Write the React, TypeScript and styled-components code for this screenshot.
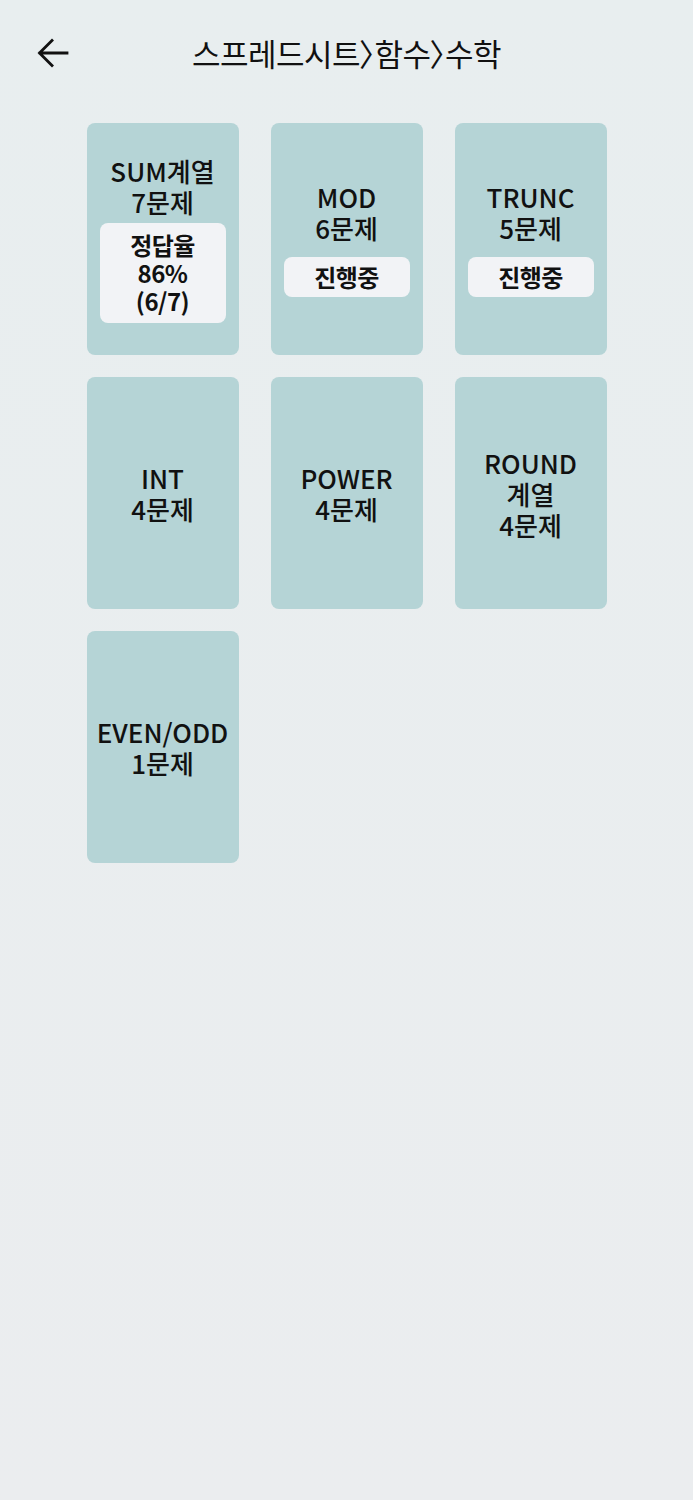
import * as React from "react";
import styled, { createGlobalStyle } from "styled-components";

type Topic = {
  name: string[];
  count: number;
  status?: "progress" | "done";
  rate?: { percent: number; correct: number; total: number };
};

const topics: Topic[] = [
  { name: ["SUM계열"], count: 7, status: "done", rate: { percent: 86, correct: 6, total: 7 } },
  { name: ["MOD"], count: 6, status: "progress" },
  { name: ["TRUNC"], count: 5, status: "progress" },
  { name: ["INT"], count: 4 },
  { name: ["POWER"], count: 4 },
  { name: ["ROUND", "계열"], count: 4 },
  { name: ["EVEN/ODD"], count: 1 },
];

const crumbs = ["스프레드시트", "함수", "수학"];

const GlobalStyle = createGlobalStyle`
  html, body {
    margin: 0;
    padding: 0;
  }
  body {
    font-family: "Noto Sans CJK KR", "Noto Sans", sans-serif;
    color: #111;
  }
`;

const Page = styled.div`
  min-height: 1500px;
  background: linear-gradient(180deg, #e8eeef 0%, #ebedef 100%);
  box-sizing: border-box;
`;

const Header = styled.header`
  height: 104px;
  padding-bottom: 2px;
  display: flex;
  align-items: center;
  position: relative;
  justify-content: center;
`;

const BackButton = styled.button`
  position: absolute;
  left: 36px;
  top: 36px;
  width: 34px;
  height: 34px;
  padding: 0;
  border: none;
  background: none;
  cursor: pointer;
  display: flex;
  align-items: center;
  justify-content: center;
`;

const Title = styled.h1`
  margin: 0;
  font-size: 31px;
  font-weight: 400;
  letter-spacing: -0.5px;
  color: #111;
`;

const Chevron = styled.span`
  margin-left: -1px;
  margin-right: -15px;
`;

const Grid = styled.div`
  display: grid;
  grid-template-columns: repeat(3, 152px);
  grid-auto-rows: 232px;
  column-gap: 32px;
  row-gap: 22px;
  justify-content: center;
  padding-top: 17px;
`;

const Card = styled.div`
  background: #b5d4d6;
  border-radius: 8px;
  display: flex;
  flex-direction: column;
  align-items: center;
  justify-content: center;
  padding: 0 13px;
  cursor: pointer;
`;

const CardTitle = styled.div`
  font-size: 26px;
  line-height: 31px;
  font-weight: 500;
  text-align: center;
  white-space: nowrap;
`;

const Badge = styled.div<{ $tall?: boolean }>`
  align-self: stretch;
  margin-top: ${(p) => (p.$tall ? "6px" : "14px")};
  background: #f2f3f6;
  border-radius: 8px;
  padding: ${(p) => (p.$tall ? "8px 0" : "6px 0")};
  font-size: 24px;
  line-height: 28px;
  font-weight: 700;
  letter-spacing: -0.5px;
  text-align: center;
`;

const BackIcon = () => (
  <svg width="34" height="34" viewBox="0 0 34 34" fill="none">
    <path
      d="M31 17H4M16 4.5L3.5 17L16 29.5"
      stroke="#111"
      strokeWidth="2.8"
      strokeLinecap="square"
    />
  </svg>
);

const TopicCard = ({ topic }: { topic: Topic }) => (
  <Card>
    {topic.name.map((line) => (
      <CardTitle key={line}>{line}</CardTitle>
    ))}
    <CardTitle>{topic.count}문제</CardTitle>
    {topic.status === "done" && topic.rate ? (
      <Badge $tall>
        정답율
        <br />
        {topic.rate.percent}%
        <br />({topic.rate.correct}/{topic.rate.total})
      </Badge>
    ) : null}
    {topic.status === "progress" ? <Badge>진행중</Badge> : null}
  </Card>
);

export default function App() {
  return (
    <Page>
      <GlobalStyle />
      <Header>
        <BackButton aria-label="뒤로">
          <BackIcon />
        </BackButton>
        <Title>
          {crumbs.map((c, i) => (
            <React.Fragment key={c}>
              {i > 0 ? <Chevron>〉</Chevron> : null}
              {c}
            </React.Fragment>
          ))}
        </Title>
      </Header>
      <Grid>
        {topics.map((t) => (
          <TopicCard key={t.name.join("")} topic={t} />
        ))}
      </Grid>
    </Page>
  );
}
